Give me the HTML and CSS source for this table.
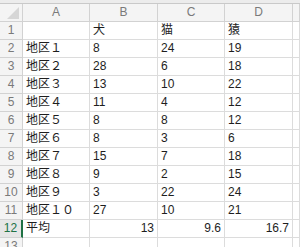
FILE: index.html
```html
<!DOCTYPE html>
<html>
<head>
<meta charset="utf-8">
<link rel="stylesheet" href="styles.css">
</head>
<body>
<div class="topbar"></div>
<div class="sheet">
  <div class="hd corner"><span class="tri"></span></div>
  <div class="hd col">A</div><div class="hd col">B</div><div class="hd col">C</div><div class="hd col">D</div><div class="hd col"></div>

  <div class="hd rn">1</div><div class="c"></div><div class="c">犬</div><div class="c">猫</div><div class="c">猿</div><div class="c"></div>
  <div class="hd rn">2</div><div class="c">地区１</div><div class="c">8</div><div class="c">24</div><div class="c">19</div><div class="c"></div>
  <div class="hd rn">3</div><div class="c">地区２</div><div class="c">28</div><div class="c">6</div><div class="c">18</div><div class="c"></div>
  <div class="hd rn">4</div><div class="c">地区３</div><div class="c">13</div><div class="c">10</div><div class="c">22</div><div class="c"></div>
  <div class="hd rn">5</div><div class="c">地区４</div><div class="c">11</div><div class="c">4</div><div class="c">12</div><div class="c"></div>
  <div class="hd rn">6</div><div class="c">地区５</div><div class="c">8</div><div class="c">8</div><div class="c">12</div><div class="c"></div>
  <div class="hd rn">7</div><div class="c">地区６</div><div class="c">8</div><div class="c">3</div><div class="c">6</div><div class="c"></div>
  <div class="hd rn">8</div><div class="c">地区７</div><div class="c">15</div><div class="c">7</div><div class="c">18</div><div class="c"></div>
  <div class="hd rn">9</div><div class="c">地区８</div><div class="c">9</div><div class="c">2</div><div class="c">15</div><div class="c"></div>
  <div class="hd rn">10</div><div class="c">地区９</div><div class="c">3</div><div class="c">22</div><div class="c">24</div><div class="c"></div>
  <div class="hd rn">11</div><div class="c">地区１０</div><div class="c">27</div><div class="c">10</div><div class="c">21</div><div class="c"></div>
  <div class="hd rn sel">12</div><div class="c">平均</div><div class="c num">13</div><div class="c num">9.6</div><div class="c num">16.7</div><div class="c"></div>
  <div class="hd rn">13</div><div class="c"></div><div class="c"></div><div class="c"></div><div class="c"></div><div class="c"></div>
</div>
</body>
</html>
```
FILE: styles.css
```css
html, body {
  margin: 0;
  padding: 0;
  background: #ffffff;
  overflow: hidden;
}
body {
  width: 300px;
  height: 247px;
  font-family: "Liberation Sans", "Noto Sans CJK JP", sans-serif;
  font-size: 12px;
  color: #1e1e1e;
}
.topbar {
  height: 3px;
  background: #ececec;
  border-bottom: 1px solid #c9c9c9;
}
.sheet {
  display: grid;
  grid-template-columns: 23px 67px 68px 67px 68px 1fr;
  grid-auto-rows: 18px;
}
.sheet > div {
  box-sizing: border-box;
  border-right: 1px solid #dcdcdc;
  border-bottom: 1px solid #dcdcdc;
  line-height: 17px;
  white-space: nowrap;
  overflow: hidden;
}
.hd {
  background: #f4f4f4;
  color: #7a7a7a;
  text-align: center;
}
.sheet > .hd {
  border-color: #d2d2d2;
}
.corner {
  position: relative;
}
.tri {
  position: absolute;
  right: 3px;
  bottom: 2px;
  width: 0;
  height: 0;
  border-left: 12px solid transparent;
  border-bottom: 12px solid #d6d6d6;
}
.col {
  font-size: 12px;
}
.rn {
  font-size: 12px;
}
.c {
  padding: 0 3px;
}
.num {
  text-align: right;
}
.sheet > .sel {
  color: #207245;
  background: #e6e6e6;
  border-right: 2px solid #207245;
}
```
